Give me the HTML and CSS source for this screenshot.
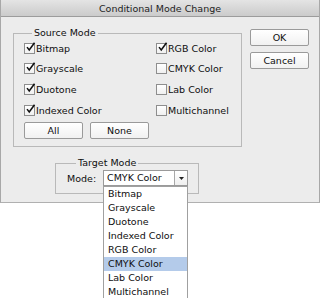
FILE: index.html
```html
<!DOCTYPE html>
<html>
<head>
<meta charset="utf-8">
<link rel="stylesheet" href="styles.css">
</head>
<body>
<div class="dialog">
  <div class="titlebar">Conditional Mode Change</div>
  <div class="content">
    <div class="leftcol">
      <fieldset class="group source">
        <legend>Source Mode</legend>
        <div class="grid">
          <label class="opt"><span class="cb checked"><svg viewBox="0 0 12 12"><path d="M2.2 5.6 L4.6 8.6 L10.4 0.8"/></svg></span>Bitmap</label>
          <label class="opt"><span class="cb checked"><svg viewBox="0 0 12 12"><path d="M2.2 5.6 L4.6 8.6 L10.4 0.8"/></svg></span>RGB Color</label>
          <label class="opt"><span class="cb checked"><svg viewBox="0 0 12 12"><path d="M2.2 5.6 L4.6 8.6 L10.4 0.8"/></svg></span>Grayscale</label>
          <label class="opt"><span class="cb"></span>CMYK Color</label>
          <label class="opt"><span class="cb checked"><svg viewBox="0 0 12 12"><path d="M2.2 5.6 L4.6 8.6 L10.4 0.8"/></svg></span>Duotone</label>
          <label class="opt"><span class="cb"></span>Lab Color</label>
          <label class="opt"><span class="cb checked"><svg viewBox="0 0 12 12"><path d="M2.2 5.6 L4.6 8.6 L10.4 0.8"/></svg></span>Indexed Color</label>
          <label class="opt"><span class="cb"></span>Multichannel</label>
        </div>
        <div class="btnrow">
          <button class="btn small">All</button>
          <button class="btn small">None</button>
        </div>
      </fieldset>
      <fieldset class="group target">
        <legend>Target Mode</legend>
        <div class="moderow">
          <span class="modelabel">Mode:</span>
          <div class="select">
            <span class="selval">CMYK Color</span>
            <span class="selarrow"><svg viewBox="0 0 7 4"><path d="M0 0 H7 L3.5 4 Z"/></svg></span>
            <ul class="popup">
              <li>Bitmap</li>
              <li>Grayscale</li>
              <li>Duotone</li>
              <li>Indexed Color</li>
              <li>RGB Color</li>
              <li class="sel">CMYK Color</li>
              <li>Lab Color</li>
              <li>Multichannel</li>
            </ul>
          </div>
        </div>
      </fieldset>
    </div>
    <div class="rightcol">
      <button class="btn main">OK</button>
      <button class="btn main">Cancel</button>
    </div>
  </div>
</div>
</body>
</html>
```
FILE: styles.css
```css
html, body {
  margin: 0;
  padding: 0;
  background: #ffffff;
}
body {
  font-family: "DejaVu Sans", "Liberation Sans", sans-serif;
  font-size: 9.5px;
  color: #0e0e0e;
  width: 320px;
  height: 298px;
  overflow: hidden;
}
.dialog {
  width: 320px;
  height: 203px;
  box-sizing: border-box;
  background: #ececec;
  border-left: 1px solid #a8a8a8;
  border-right: 1px solid #a8a8a8;
  border-bottom: 1px solid #b0b0b0;
}
.titlebar {
  height: 16px;
  line-height: 17px;
  text-align: center;
  color: #1e1e1e;
  background: linear-gradient(#e4e4e4, #cbcbcb);
  border-bottom: 1px solid #9c9c9c;
}
.content {
  display: flex;
  padding-left: 12px;
}
.leftcol {
  display: flex;
  flex-direction: column;
}
.group {
  margin: 0;
  border: 1px solid #b9b9b9;
  padding: 0;
  min-width: 0;
}
.group legend {
  padding: 0 2px;
  margin-left: 8px;
  line-height: 12px;
}
.source {
  margin-top: 10px;
  width: 229px;
  box-sizing: border-box;
  padding: 0 6px 7px 10px;
}
.grid {
  display: grid;
  grid-template-columns: 132px auto;
  grid-auto-rows: 20.6px;
  margin-top: -1px;
}
.opt {
  display: flex;
  align-items: center;
  white-space: nowrap;
}
.cb {
  position: relative;
  width: 9px;
  height: 9px;
  border: 1px solid #8e8e8e;
  background: linear-gradient(#ffffff, #f0f0f0);
  margin-right: 1px;
  flex: none;
}
.cb svg {
  position: absolute;
  left: 0;
  top: -2px;
  width: 11px;
  height: 11px;
  fill: none;
  stroke: #111;
  stroke-width: 1.7;
}
.btnrow {
  display: flex;
  gap: 7px;
  margin-top: 2px;
}
.btn {
  font-family: inherit;
  font-size: 9.5px;
  color: #0e0e0e;
  background: linear-gradient(#ffffff, #f1f1f1);
  border: 1px solid #9a9a9a;
  border-radius: 2px;
  padding: 0;
  height: 17px;
  line-height: 15px;
}
.btn.small {
  width: 59px;
}
.target {
  margin-top: 10px;
  margin-left: 42px;
  width: 144px;
  box-sizing: border-box;
  padding: 1px 10px 7px 11px;
}
.target legend {
  margin-left: 9px;
}
.moderow {
  display: flex;
  align-items: center;
  justify-content: space-between;
  height: 16px;
}
.select {
  position: relative;
  display: flex;
  width: 85px;
  height: 16px;
  box-sizing: border-box;
  border: 1px solid #9a9a9a;
  background: #ffffff;
}
.selval {
  flex: 1;
  padding-left: 3px;
  line-height: 14px;
  white-space: nowrap;
}
.selarrow {
  width: 12px;
  border-left: 1px solid #a8a8a8;
  background: linear-gradient(#ffffff, #efefef);
  display: flex;
  align-items: center;
  justify-content: center;
}
.selarrow svg {
  width: 5px;
  height: 3px;
  fill: #222;
}
.popup {
  position: absolute;
  left: -1px;
  top: 15px;
  width: 85px;
  box-sizing: border-box;
  margin: 0;
  padding: 0;
  list-style: none;
  background: #ffffff;
  border: 1px solid #a0a0a0;
  border-bottom: none;
}
.popup li {
  height: 14px;
  line-height: 14px;
  padding-left: 4px;
  white-space: nowrap;
}
.popup li.sel {
  background: #b4cbea;
}
.rightcol {
  display: flex;
  flex-direction: column;
  gap: 6px;
  margin-left: 8px;
  padding-top: 12px;
}
.btn.main {
  width: 59px;
}
```
